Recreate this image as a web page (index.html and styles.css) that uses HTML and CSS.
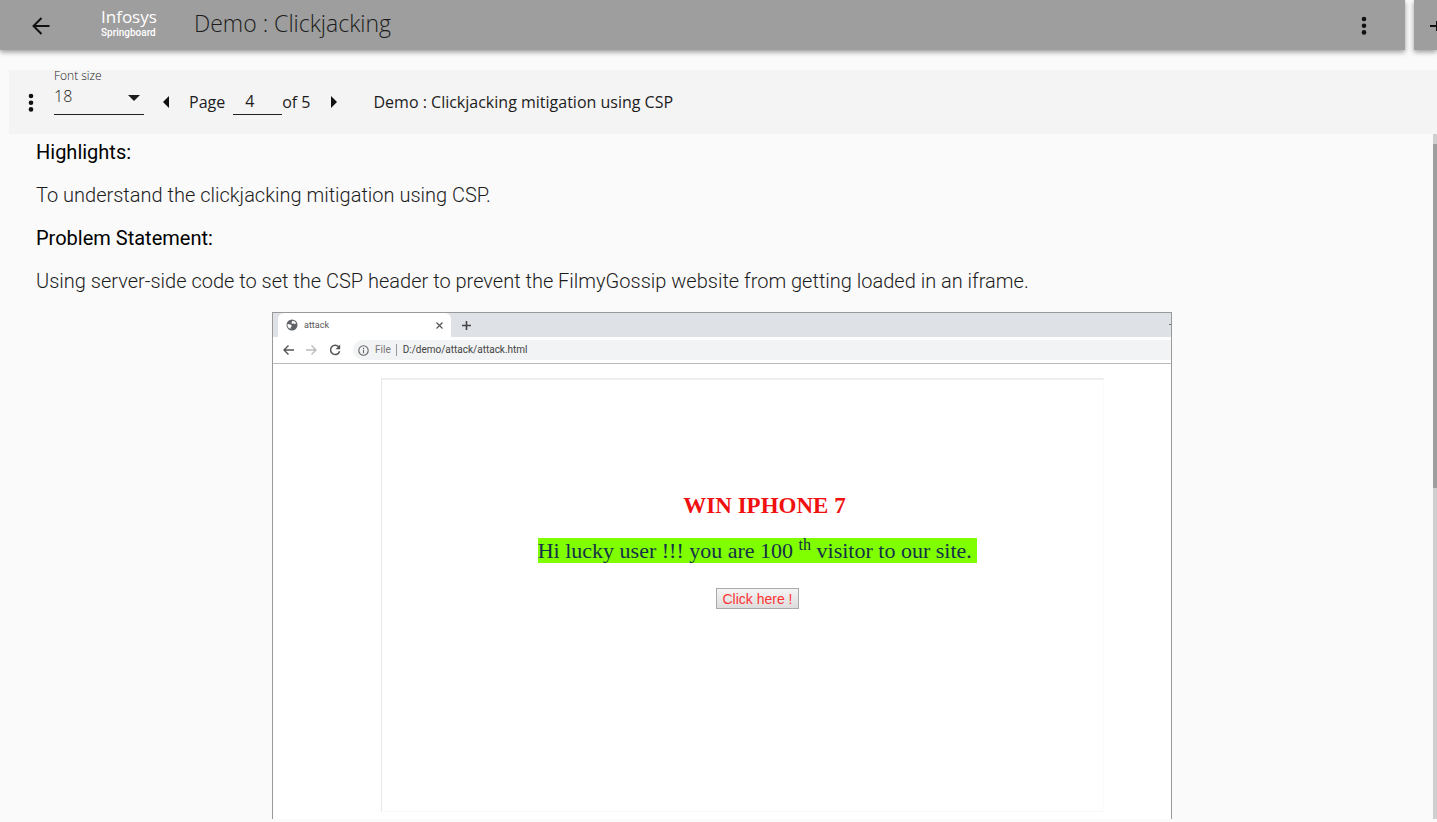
FILE: index.html
```
<!DOCTYPE html>
<html lang="en">
<head>
<meta charset="utf-8">
<title>Demo : Clickjacking</title>
<link rel="stylesheet" href="styles.css">
</head>
<body>
<div class="app">
  <header class="topbar">
    <div class="topbar-main">
      <button class="icon-btn back" aria-label="Back">
        <svg width="18" height="18" viewBox="0 0 18 18" fill="none" stroke="currentColor" stroke-width="2"><path d="M17.500 9H2M9.500 1L1.500 9l8 8"/></svg>
      </button>
      <a class="logo" href="#"><span class="logo-top">Infosys</span><span class="logo-bottom">Springboard</span></a>
      <h1 class="title">Demo : Clickjacking</h1>
      <button class="icon-btn more" aria-label="More options">
        <svg width="6" height="20" viewBox="0 0 6 20" fill="currentColor"><circle cx="3" cy="3" r="2.300"/><circle cx="3" cy="9.700" r="2.300"/><circle cx="3" cy="16.400" r="2.300"/></svg>
      </button>
    </div>
    <div class="topbar-side">
      <button class="icon-btn" aria-label="Expand">
        <svg width="18" height="18" viewBox="0 0 18 18" fill="none" stroke="currentColor" stroke-width="2"><path d="M0 9h16M7 4v10"/></svg>
      </button>
    </div>
  </header>

  <nav class="toolbar">
    <button class="icon-btn menu" aria-label="Menu">
      <svg width="6" height="20" viewBox="0 0 6 20" fill="currentColor"><circle cx="3" cy="3" r="2.300"/><circle cx="3" cy="9.700" r="2.300"/><circle cx="3" cy="16.400" r="2.300"/></svg>
    </button>
    <div class="field">
      <label class="field-label" for="size">Font size</label>
      <div class="select-wrap">
        <select class="select" id="size"><option>18</option></select>
        <svg class="caret" width="12" height="6" viewBox="0 0 12 6" fill="currentColor"><path d="M0 0h12L6 6z"/></svg>
      </div>
    </div>
    <button class="icon-btn prev" aria-label="Previous page"><svg width="6" height="12" viewBox="0 0 6 12" fill="currentColor"><path d="M6 0v12L0 6z"/></svg></button>
    <label class="page-label" for="page">Page</label>
    <input class="page-input" id="page" type="text" value="4">
    <span class="page-total">of 5</span>
    <button class="icon-btn next" aria-label="Next page"><svg width="6" height="12" viewBox="0 0 6 12" fill="currentColor"><path d="M0 0v12l6-6z"/></svg></button>
    <span class="page-title">Demo : Clickjacking mitigation using CSP</span>
  </nav>

  <div class="viewer">
    <main class="content">
      <h2 class="heading">Highlights:</h2>
      <p class="text">To understand the clickjacking mitigation using CSP.</p>
      <h2 class="heading">Problem Statement:</h2>
      <p class="text">Using server-side code to set the CSP header to prevent the FilmyGossip website from getting loaded in an iframe.</p>

      <figure class="browser">
        <div class="tabs">
          <div class="tab">
            <svg width="12" height="12" viewBox="0 0 12 12"><circle cx="6" cy="6" r="5.500" fill="#5f6368"/><path d="M1.500 5l3 .5 1.500 1.500-1.200 1-.2 1.800C2.500 9.300 1.200 7.500 1.500 5zM6.500 1.700l2.500.8 1.200 2-1.500.5-1.500-.8-1 .8-.8-1.200z" fill="#fff"/></svg>
            <span class="tab-name">attack</span>
            <svg width="7" height="7" viewBox="0 0 7 7" stroke="#555" fill="none" stroke-width="1.200"><path d="M.5.5l6 6M6.500.5l-6 6"/></svg>
          </div>
          <svg class="new-tab" width="9" height="9" viewBox="0 0 9 9" stroke="#444" stroke-width="1.600"><path d="M4.500 0v9M0 4.500h9"/></svg>
          <span class="minimize"></span>
        </div>
        <div class="address-row">
          <svg width="11" height="10" viewBox="0 0 11 10" fill="none" stroke="#555" stroke-width="1.400"><path d="M11 5H1M5.500.5L1 5l4.500 4.500"/></svg>
          <svg width="11" height="10" viewBox="0 0 11 10" fill="none" stroke="#bbb" stroke-width="1.400"><path d="M0 5h10M5.500.5L10 5 5.500 9.500"/></svg>
          <svg width="12" height="12" viewBox="0 0 12 12" fill="none" stroke="#555" stroke-width="1.500"><path d="M10 3.400A4.600 4.600 0 1 0 10.600 7.200"/><path d="M11.200.5v4.700H6.500z" fill="#555" stroke="none"/></svg>
          <div class="address">
            <svg width="11" height="11" viewBox="0 0 11 11" fill="none" stroke="#666" stroke-width="1.100"><circle cx="5.500" cy="5.500" r="4.700"/><path d="M5.500 4.800v3.400M5.500 2.700v1.200"/></svg>
            <span class="scheme">File</span><span class="url">D:/demo/attack/attack.html</span>
          </div>
        </div>
        <div class="page">
          <div class="frame">
            <h3 class="win">WIN IPHONE 7</h3>
            <p class="lucky"><mark class="mark">Hi lucky user !!! you are 100 <sup class="sup">th</sup> visitor to our site.&nbsp;</mark></p>
            <button class="click">Click here !</button>
          </div>
        </div>
      </figure>
    </main>
    <div class="scroll-track"><div class="scroll-thumb"></div></div>
  </div>
</div>
</body>
</html>
```
FILE: styles.css
```
* { box-sizing: border-box; }
body {
  margin: 0;
  background: #fafafa;
  color: #1c1c1c;
  font-family: "Open Sans", "Noto Sans", sans-serif;
}
h1, h2, h3, p, figure { margin: 0; }
svg { display: block; flex: none; }
.app {
  display: flex;
  flex-direction: column;
  height: 100vh;
  padding-bottom: 3px;
  overflow: hidden;
}
.icon-btn {
  display: flex;
  flex: none;
  padding: 0;
  border: 0;
  background: none;
  color: #111;
}

.topbar { display: flex; gap: 9px; height: 50px; flex: none; }
.topbar-main, .topbar-side {
  display: flex;
  align-items: center;
  padding-top: 2px;
  background: #9e9e9e;
  box-shadow: 0 2px 5px rgba(0, 0, 0, 0.4);
}
.topbar-main { flex: 1; padding-right: 38px; padding-left: 32px; }
.topbar-side { width: 23px; padding-left: 16px; overflow: hidden; }
.logo {
  display: flex;
  flex-direction: column;
  margin-left: 51px;
  padding-bottom: 4px;
  width: 93px;
  color: #fff;
  text-decoration: none;
}
.logo-top {
  font-family: "Open Sans", sans-serif;
  font-size: 17px;
  line-height: 18px;
}
.logo-bottom {
  font-family: Roboto, sans-serif;
  font-size: 10px;
  line-height: 14px;
  font-weight: 500;
}
.title {
  flex: 1;
  padding-bottom: 6px;
  font-size: 23px;
  line-height: 32px;
  font-weight: 300;
}

.toolbar {
  display: flex;
  align-items: center;
  flex: none;
  height: 64px;
  margin: 20px 0 0 9px;
  padding-left: 19px;
  background: #f4f4f4;
  font-size: 16px;
}
.menu { padding-top: 2px; }
.field { align-self: flex-start; width: 90px; margin-left: 20px; }
.field-label { display: block; font-size: 12px; line-height: 12px; font-weight: 300; }
.select-wrap {
  display: flex;
  align-items: center;
  height: 33px;
  padding-right: 4px;
  border-bottom: 1px solid #222;
}
.select {
  flex: 1;
  padding: 0 0 4px;
  border: 0;
  background: none;
  color: inherit;
  font: inherit;
  font-weight: 300;
  appearance: none;
}
.prev { margin-left: 19px; }
.page-label { margin-left: 20px; }
.page-input {
  width: 49px;
  height: 26px;
  margin-left: 8px;
  padding: 0 0 2px 12px;
  border: 0;
  border-bottom: 1px solid #222;
  background: none;
  color: inherit;
  font: inherit;
}
.next { margin-left: 20px; }
.page-title { margin-left: 37px; }

.viewer { display: flex; flex: 1; min-height: 0; }
.content {
  flex: 1;
  min-width: 0;
  padding: 6px 25px 0 36px;
  overflow: hidden;
  display: flex;
  flex-direction: column;
  gap: 19px;
  font-family: Roboto, sans-serif;
}
.heading, .text { font-size: 20px; line-height: 24px; }
.heading { font-weight: 400; color: #000; }
.text { font-weight: 300; }
.scroll-track { width: 4px; padding-top: 10px; background: #cfcfcf; }
.scroll-thumb { height: 51%; background: #9e9e9e; }

.browser {
  flex: none;
  align-self: center;
  width: 100%;
  max-width: 900px;
  border: 1px solid #999;
  background: #fff;
}
.tabs { display: flex; align-items: center; height: 24px; background: #dee1e6; }
.tab {
  display: flex;
  align-items: center;
  width: 173px;
  height: 24px;
  margin-left: 5px;
  padding: 0 8px;
  border-radius: 6px 6px 0 0;
  background: #fff;
}
.tab-name { flex: 1; margin-left: 6px; font-size: 9px; color: #555; }
.new-tab { margin-left: 11px; }
.minimize { width: 2px; height: 1px; margin: 0 0 2px auto; background: #777; }
.address-row {
  display: flex;
  align-items: center;
  gap: 12px;
  height: 27px;
  padding-left: 10px;
  border-bottom: 1px solid #bbb;
}
.address {
  display: flex;
  align-items: center;
  flex: 1;
  height: 20px;
  padding-left: 5px;
  border-radius: 10px 0 0 10px;
  background: #f1f3f4;
  font-size: 10px;
  line-height: 12px;
}
.scheme { margin-left: 6px; padding-right: 5px; border-right: 1px solid #999; color: #777; }
.url { margin-left: 6px; color: #444; }
.page { padding: 14px 67px 28px 108px; }
.frame {
  display: flex;
  flex-direction: column;
  align-items: center;
  height: 434px;
  padding: 113px 0 0 30px;
  border: 1px solid #fafafa;
  border-top: 2px solid #eee;
  border-left: 1px solid #e8e8e8;
  font-family: "Liberation Serif", serif;
}
.win { padding-left: 14px; font-size: 23px; line-height: 26px; color: #f01010; }
.lucky { margin-top: 19px; font-size: 22px; line-height: 26px; color: #14304a; }
.mark { background: #80ff00; color: inherit; }
.sup { font-size: 16px; line-height: 0; }
.click {
  height: 21px;
  margin-top: 24px;
  padding: 0 5px;
  border: 1px solid #aaa;
  background: linear-gradient(#f4f4f4, #ddd);
  color: #f33;
  font-family: "Liberation Sans", sans-serif;
  font-size: 14px;
  line-height: 18px;
}
```
